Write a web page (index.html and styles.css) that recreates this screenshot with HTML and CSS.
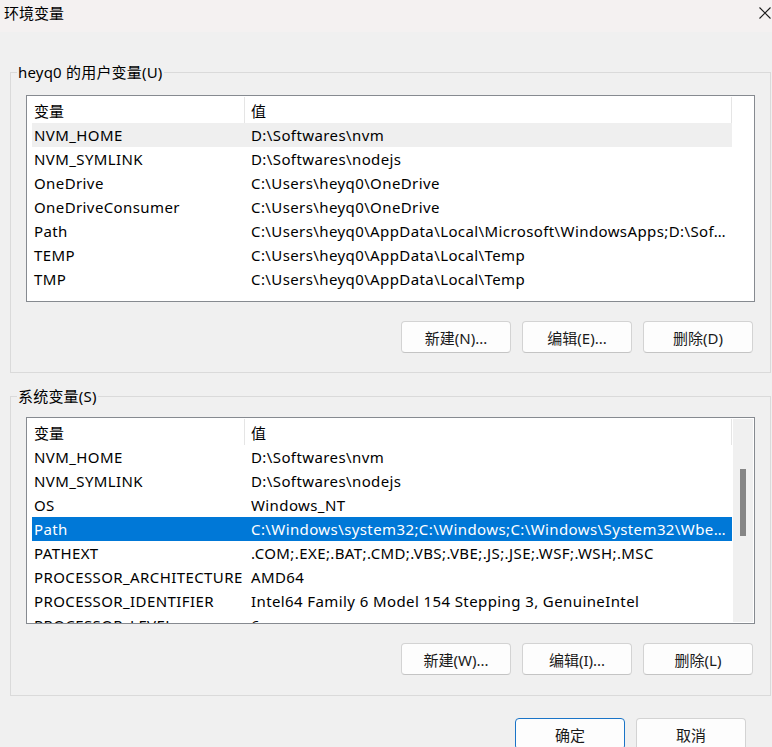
FILE: index.html
```html
<!DOCTYPE html>
<html lang="zh-CN">

<head>
    <meta charset="UTF-8">
    <meta name="viewport" content="width=device-width, initial-scale=1.0">
    <link rel="stylesheet" href="styles.css">
    <title>环境变量</title>
</head>

<body>
    <div class="titlebar">
        <span class="title">环境变量</span>
        <svg class="close" width="12" height="12" viewBox="0 0 12 12">
            <path d="M0.5 0.5 L11.5 11.5 M11.5 0.5 L0.5 11.5" stroke="#1a1a1a" stroke-width="1.1" fill="none" />
        </svg>
    </div>

    <div class="dialog">
        <fieldset class="group user">
            <legend>heyq0 的用户变量(U)</legend>
            <div class="list">
                <div class="list-body">
                    <div class="list-head">
                        <span class="cell name">变量</span>
                        <span class="cell value">值</span>
                    </div>
                    <div class="row hover"><span class="name">NVM_HOME</span><span class="value">D:\Softwares\nvm</span></div>
                    <div class="row"><span class="name">NVM_SYMLINK</span><span class="value">D:\Softwares\nodejs</span></div>
                    <div class="row"><span class="name">OneDrive</span><span class="value">C:\Users\heyq0\OneDrive</span></div>
                    <div class="row"><span class="name">OneDriveConsumer</span><span class="value">C:\Users\heyq0\OneDrive</span></div>
                    <div class="row"><span class="name">Path</span><span class="value">C:\Users\heyq0\AppData\Local\Microsoft\WindowsApps;D:\Sof...</span></div>
                    <div class="row"><span class="name">TEMP</span><span class="value">C:\Users\heyq0\AppData\Local\Temp</span></div>
                    <div class="row"><span class="name">TMP</span><span class="value">C:\Users\heyq0\AppData\Local\Temp</span></div>
                </div>
            </div>
            <div class="buttons">
                <button class="btn">新建(N)...</button>
                <button class="btn">编辑(E)...</button>
                <button class="btn">删除(D)</button>
            </div>
        </fieldset>

        <fieldset class="group system">
            <legend>系统变量(S)</legend>
            <div class="list">
                <div class="list-body">
                    <div class="list-head">
                        <span class="cell name">变量</span>
                        <span class="cell value">值</span>
                    </div>
                    <div class="row"><span class="name">NVM_HOME</span><span class="value">D:\Softwares\nvm</span></div>
                    <div class="row"><span class="name">NVM_SYMLINK</span><span class="value">D:\Softwares\nodejs</span></div>
                    <div class="row"><span class="name">OS</span><span class="value">Windows_NT</span></div>
                    <div class="row selected"><span class="name">Path</span><span class="value">C:\Windows\system32;C:\Windows;C:\Windows\System32\Wbe...</span></div>
                    <div class="row"><span class="name">PATHEXT</span><span class="value">.COM;.EXE;.BAT;.CMD;.VBS;.VBE;.JS;.JSE;.WSF;.WSH;.MSC</span></div>
                    <div class="row"><span class="name">PROCESSOR_ARCHITECTURE</span><span class="value">AMD64</span></div>
                    <div class="row"><span class="name">PROCESSOR_IDENTIFIER</span><span class="value">Intel64 Family 6 Model 154 Stepping 3, GenuineIntel</span></div>
                    <div class="row"><span class="name">PROCESSOR_LEVEL</span><span class="value">6</span></div>
                </div>
                <div class="scrollbar">
                    <div class="thumb"></div>
                </div>
            </div>
            <div class="buttons">
                <button class="btn">新建(W)...</button>
                <button class="btn">编辑(I)...</button>
                <button class="btn">删除(L)</button>
            </div>
        </fieldset>

        <div class="footer">
            <button class="btn default">确定</button>
            <button class="btn">取消</button>
        </div>
    </div>
</body>

</html>
```

FILE: styles.css
```css
* {
    margin: 0;
    padding: 0;
    box-sizing: border-box;
}

body {
    width: 772px;
    height: 747px;
    overflow: hidden;
    background-color: #f0f0f0;
    font-family: "Noto Sans", "Noto Sans CJK SC", sans-serif;
    font-size: 15px;
    color: #000;
}

.titlebar {
    height: 32px;
    display: flex;
    justify-content: space-between;
    align-items: flex-start;
    background-color: #f4f1f1;
}

.title {
    padding-left: 4px;
    line-height: 26px;
}

.close {
    margin-top: 7px;
    margin-right: 1px;
}

.dialog {
    padding-top: 30px;
}

.group {
    margin: 0 1px 0 10px;
    padding: 13px 15px 19px;
    border: 1px solid #dadada;
    min-width: 0;
}

.group.system {
    margin-top: 13px;
    padding-top: 11px;
    padding-bottom: 20px;
}

.group legend {
    margin-left: -9px;
    padding: 0 1px;
    line-height: 20px;
    letter-spacing: 0.2px;
}

.list {
    height: 207px;
    display: flex;
    padding-left: 5px;
    background-color: #fff;
    border: 1px solid #868a90;
    overflow: hidden;
}

.list-body {
    width: 700px;
    flex-shrink: 0;
}

.list-head {
    height: 27px;
    display: grid;
    grid-template-columns: 213px 1fr;
}

.list-head .cell {
    margin-top: 1px;
    height: 26px;
    line-height: 28px;
    border-right: 1px solid #e5e5e5;
}

.row {
    height: 24px;
    line-height: 24px;
    display: grid;
    grid-template-columns: 213px 1fr;
    white-space: nowrap;
    letter-spacing: 0.4px;
}

.name {
    padding-left: 2px;
    overflow: hidden;
}

.value {
    padding: 0 6px;
    overflow: hidden;
    text-overflow: ellipsis;
}

.row.hover {
    background-color: #efefef;
}

.row.selected {
    background-color: #0078d7;
    color: #fff;
}

.scrollbar {
    width: 20px;
    margin: 1px 0 1px 1px;
    background-color: #f0f0f0;
    padding-top: 50px;
}

.thumb {
    width: 6px;
    height: 67px;
    margin-left: 7px;
    background-color: #868686;
}

.buttons {
    display: flex;
    justify-content: flex-end;
    gap: 11px;
    margin-top: 19px;
    padding-right: 2px;
}

.btn {
    width: 110px;
    height: 32px;
    font-family: inherit;
    font-size: 15px;
    color: #1a1a1a;
    background-color: #fdfdfd;
    border: 1px solid #d3d3d3;
    border-bottom-color: #c4c4c4;
    border-radius: 4px;
}

.btn.default {
    border-color: #1a74c7;
}

.footer {
    display: flex;
    justify-content: flex-end;
    gap: 11px;
    margin-top: 22px;
    padding-right: 26px;
}
```
